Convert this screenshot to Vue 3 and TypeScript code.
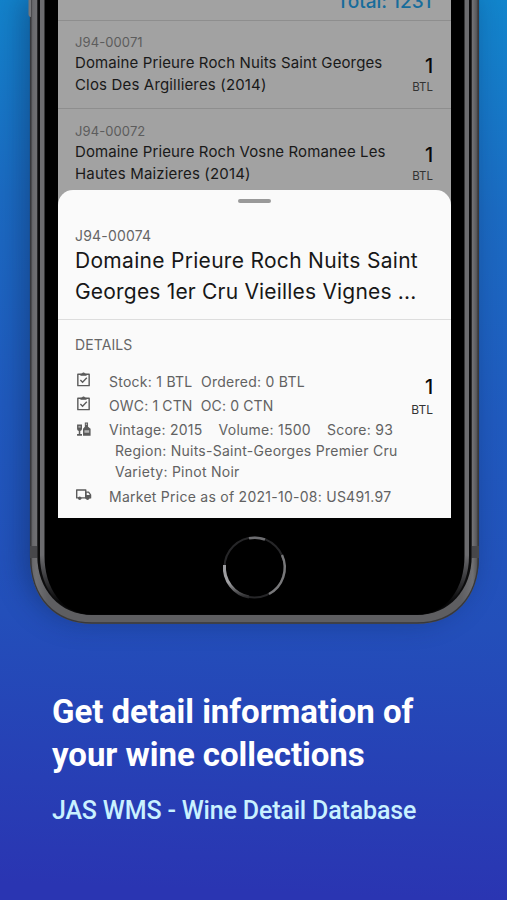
<script setup lang="ts">
interface WineRow {
  code: string
  lines: string[]
  qty: number
}

const rows: WineRow[] = [
  { code: 'J94-00071', lines: ['Domaine Prieure Roch Nuits Saint Georges', 'Clos Des Argillieres (2014)'], qty: 1 },
  { code: 'J94-00072', lines: ['Domaine Prieure Roch Vosne Romanee Les', 'Hautes Maizieres (2014)'], qty: 1 },
]
</script>

<template>
  <main class="page">
    <section class="phone">
      <svg class="shell" width="449" height="624" viewBox="0 0 449 624">
        <defs>
          <linearGradient id="rim" x1="0" y1="0" x2="1" y2="0">
            <stop offset="0" stop-color="#3b3b3f" />
            <stop offset=".006" stop-color="#68686b" />
            <stop offset=".014" stop-color="#707073" />
            <stop offset=".04" stop-color="#5e5e61" />
            <stop offset=".96" stop-color="#5e5e61" />
            <stop offset=".986" stop-color="#707073" />
            <stop offset=".994" stop-color="#5a5a5d" />
            <stop offset="1" stop-color="#303034" />
          </linearGradient>
          <linearGradient id="bezel" gradientUnits="userSpaceOnUse" x1="0" y1="555" x2="0" y2="602">
            <stop offset="0" stop-color="#6c6c6f" />
            <stop offset=".5" stop-color="#38383b" />
            <stop offset="1" stop-color="#060607" />
          </linearGradient>
          <linearGradient id="ring" x1="0" y1="0" x2="0" y2="1">
            <stop offset="0" stop-color="#9b9b9e" />
            <stop offset=".55" stop-color="#a0a0a3" />
            <stop offset="1" stop-color="#2a2a2c" />
          </linearGradient>
        </defs>
        <path d="M0 -20V556C0 599 25 623.800 62 623.800H387C424 623.800 449 599 449 556V-20Z" fill="url(#rim)" />
        <path d="M.6 -20V556C.6 598 25 623 62 623H387C424 623 448.400 598 448.400 556V-20" fill="none" stroke="#38383b" stroke-width="1.400" />
        <path d="M0 546h7v12h-7zM442 546h7v12h-7z" fill="#47474a" />
        <path d="M7.300 -20V556C7.300 590 30 615 62 615H387C419 615 441.700 590 441.700 556V-20Z" fill="#0c0c0d" />
        <path d="M10 -20V556C10 590 31 614.500 62 614.500H387C418 614.500 439 590 439 556V-20Z" fill="url(#bezel)" />
        <path d="M14.500 -20V556C14.500 588 32 614.500 62 614.500H387C417 614.500 434.500 588 434.500 556V-20Z" fill="#000" />
        <circle cx="224.500" cy="567.500" r="30" fill="none" stroke="#262628" stroke-width="2" />
        <path d="M194.500 565A30 30 0 0 0 219 597" fill="none" stroke="url(#ring)" stroke-width="3" />
        <path d="M252 555A30 30 0 0 1 239 594" fill="none" stroke="#78787a" stroke-width="2.400" />
        <path d="M219 538.300A30 30 0 0 1 235 539.500" fill="none" stroke="#6d6d70" stroke-width="2.600" />
        <path d="M-1.500 -4V14Q-1.500 17 1 17V-4Z" fill="#77777a" />
      </svg>

      <div class="screen">
        <div class="total"><span>Total: 1231</span></div>
        <article v-for="row in rows" :key="row.code" class="row">
          <div class="info">
            <div class="code">{{ row.code }}</div>
            <div v-for="line in row.lines" :key="line" class="name">{{ line }}</div>
          </div>
          <div class="qty">
            <strong>{{ row.qty }}</strong>
            <small>BTL</small>
          </div>
        </article>

        <section class="sheet">
          <div class="handle"></div>
          <header class="head">
            <div class="code">J94-00074</div>
            <h2 class="title"><span>Domaine Prieure Roch Nuits Saint</span><br /><span class="t2">Georges 1er Cru Vieilles Vignes ...</span></h2>
          </header>
          <div class="body">
            <div class="label">DETAILS</div>
            <div class="cols">
              <ul class="list">
                <li class="item">
                  <svg class="icon" viewBox="0 0 18 18"><path d="M3 3.500h12v12H3z" fill="none" stroke="#5b5b5b" stroke-width="1.500" stroke-linejoin="round" /><path d="M6 3.500h1.500a1.500 1.500 0 0 1 3 0H12v1H6z" fill="#5b5b5b" stroke="#5b5b5b" /><path d="M5.700 9.500l2.300 2.300 4.500-4.600" fill="none" stroke="#5b5b5b" stroke-width="1.500" /></svg>
                  <span>Stock: 1 BTL&nbsp; Ordered: 0 BTL</span>
                </li>
                <li class="item">
                  <svg class="icon" viewBox="0 0 18 18"><path d="M3 3.500h12v12H3z" fill="none" stroke="#5b5b5b" stroke-width="1.500" stroke-linejoin="round" /><path d="M6 3.500h1.500a1.500 1.500 0 0 1 3 0H12v1H6z" fill="#5b5b5b" stroke="#5b5b5b" /><path d="M5.700 9.500l2.300 2.300 4.500-4.600" fill="none" stroke="#5b5b5b" stroke-width="1.500" /></svg>
                  <span class="tight">OWC: 1 CTN&nbsp; OC: 0 CTN</span>
                </li>
                <li class="item">
                  <svg class="icon wine" viewBox="0 0 18 18"><path d="M2.200 3.800h5.200v4.800q0 1.600-1.800 2v3.200h1.800v1.700H2.200v-1.700H4v-3.200Q2.200 10.200 2.200 8.600z" fill="#5b5b5b" /><path d="M3.600 5.200h2.400v1.900H3.600z" fill="#aaa" /><path d="M10.400 1.500h3.400v4.500l2.700 2.100V15.500H8.500V8.100l1.900-2.100z" fill="#5b5b5b" /><path d="M11.400 2.700h1.400v1.500h-1.400zM10 9.700h5v2.700h-5z" fill="#b5b5b5" /></svg>
                  <div class="facts">
                    <div class="specs"><span>Vintage: 2015</span><span>Volume: 1500</span><span>Score: 93</span></div>
                    <div class="sub">Region: Nuits-Saint-Georges Premier Cru</div>
                    <div class="sub">Variety: Pinot Noir</div>
                  </div>
                </li>
                <li class="item market">
                  <svg class="icon" viewBox="0 0 18 18"><path d="M1.800 4.200h9.600v8.400H1.800z" fill="none" stroke="#5b5b5b" stroke-width="1.500" stroke-linejoin="round" /><path d="M11.400 6.500h3l2.100 3v3.100h-5.100z" fill="none" stroke="#5b5b5b" stroke-width="1.400" stroke-linejoin="round" /><path d="M11.500 9.500h5v3h-5z" fill="#5b5b5b" /><circle cx="5" cy="13" r="1.800" fill="#5b5b5b" /><circle cx="13.300" cy="13" r="1.800" fill="#5b5b5b" /></svg>
                  <span>Market Price as of 2021-10-08: US491.97</span>
                </li>
              </ul>
              <div class="qty">
                <strong>1</strong>
                <small>BTL</small>
              </div>
            </div>
          </div>
        </section>
      </div>
    </section>

    <section class="caption">
      <h1>Get detail information of<br />your wine collections</h1>
      <p>JAS WMS - Wine Detail Database</p>
    </section>
  </main>
</template>

<style>
body {
  margin: 0;
}
</style>

<style scoped>
.page {
  width: 507px;
  height: 900px;
  overflow: hidden;
  background: linear-gradient(182deg, #1285cc 0, #1b6bc2 210px, #205abe 420px, #234fba 630px, #2642b6 760px, #2a35b2 900px);
  font-family: Inter, 'Liberation Sans', sans-serif;
}
.phone {
  position: relative;
  width: 449px;
  height: 624px;
  margin-left: 30px;
  border-radius: 0 0 62px 62px;
  box-shadow: -7px -4px 28px rgba(10, 30, 70, .4);
}
.shell {
  position: absolute;
  inset: 0;
  overflow: visible;
}
.screen {
  position: relative;
  width: 393.5px;
  height: 518px;
  margin-left: 27.5px;
  overflow: hidden;
  background: #a2a2a2;
}
.total {
  box-sizing: border-box;
  height: 20.5px;
  display: flex;
  justify-content: flex-end;
  align-items: flex-end;
  padding-right: 19.5px;
  border-bottom: 1px solid #8e8e8e;
  color: #176c9b;
  font-size: 19px;
  font-weight: 500;
  line-height: 24px;
}
.total span {
  margin-bottom: 6px;
}
.row {
  box-sizing: border-box;
  height: 88px;
  display: flex;
  justify-content: space-between;
  padding: 13px 18px 0 17.5px;
  border-bottom: 1px solid #8e8e8e;
}
.row + .row {
  height: 89px;
  padding-top: 14px;
  border: 0;
}
.code {
  color: #5c5c5c;
  font-size: 13px;
  line-height: 18px;
  letter-spacing: .1px;
}
.row .code {
  line-height: 16px;
  padding-bottom: 2px;
}
.name {
  color: #191919;
  font-size: 15px;
  line-height: 22px;
  letter-spacing: .12px;
  white-space: nowrap;
}
.info .name:last-child {
  letter-spacing: .16px;
}
.qty {
  display: flex;
  flex-direction: column;
  align-items: flex-end;
  color: #080808;
}
.row .qty {
  padding-top: 20px;
}
.qty strong {
  font-size: 19.5px;
  font-weight: 500;
  line-height: 24px;
}
.qty small {
  color: #333;
  font-size: 11.5px;
  line-height: 16px;
}
.row .qty small {
  padding-top: 1px;
}
.sheet {
  box-sizing: border-box;
  height: 328.5px;
  margin-top: -8px;
  position: relative;
  border-radius: 15px 15px 0 0;
  background: #fafafa;
  overflow: hidden;
}
.handle {
  width: 33px;
  height: 4px;
  margin: 9px auto 0;
  border-radius: 2px;
  background: #999;
}
.head {
  box-sizing: border-box;
  height: 117px;
  padding: 24px 0 0 17.5px;
  border-bottom: 1px solid #ddd;
}
.head .code {
  color: #666;
  font-size: 14px;
  letter-spacing: .2px;
}
.title {
  margin: 0;
  color: #171717;
  font-size: 21px;
  font-weight: 400;
  line-height: 31px;
  letter-spacing: .3px;
  white-space: nowrap;
}
.t2 {
  letter-spacing: .19px;
}
.body {
  padding: 16px 18px 0 17.5px;
}
.label {
  color: #666;
  font-size: 14px;
  line-height: 18px;
  letter-spacing: .1px;
}
.cols {
  display: flex;
  justify-content: space-between;
  margin-top: 16px;
}
.cols .qty {
  padding-top: 5px;
  width: 30px;
}
.cols .qty small {
  font-size: 12px;
  padding-top: 3px;
}
.list {
  margin: 0;
  padding: 0;
  list-style: none;
  color: #626262;
  font-size: 14px;
  line-height: 24px;
  letter-spacing: .26px;
  white-space: nowrap;
}
.tight {
  letter-spacing: .14px;
}
.item {
  display: flex;
  gap: 17px;
}
.icon {
  flex: none;
  width: 17px;
  height: 17px;
  margin-top: 1.5px;
}
.wine {
  margin-top: 3px;
}
.facts {
  padding-top: 1px;
}
.specs {
  display: flex;
  gap: 16px;
  line-height: 22px;
}
.sub {
  padding-left: 6px;
  line-height: 21px;
}
.specs + .sub {
  margin-top: -1px;
}
.market {
  margin-top: 3px;
}
.caption {
  padding: 66px 0 0 52px;
  font-family: Roboto, sans-serif;
  white-space: nowrap;
}
.caption h1 {
  margin: 0;
  color: #fff;
  font-size: 33px;
  font-weight: 700;
  line-height: 43px;
  letter-spacing: -.04px;
}
.caption p {
  margin: 18px 0 0;
  color: #c9f1ff;
  font-size: 25px;
  font-weight: 500;
  line-height: 34px;
  letter-spacing: -.17px;
}
</style>
